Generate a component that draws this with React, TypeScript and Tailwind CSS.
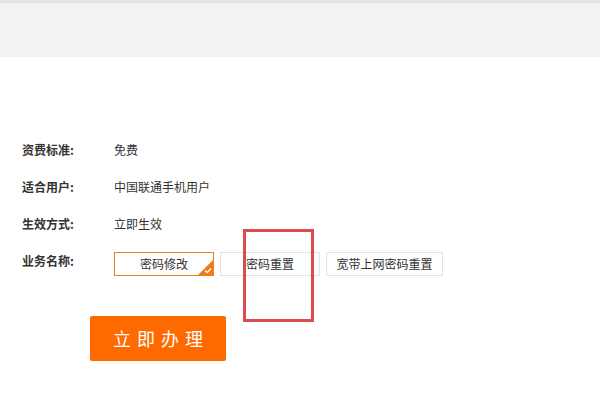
import React from "react";

const font = { fontFamily: '"Microsoft YaHei", "Noto Sans CJK SC", "Noto Sans", sans-serif' };

function Row({ label, children }: { label: string; children: React.ReactNode }) {
  return (
    <div className="flex items-start">
      <span className="w-[92px] shrink-0 text-[12px] leading-[18px] font-bold text-[#333]">{label}</span>
      <div className="text-[12px] leading-[18px] text-[#333]">{children}</div>
    </div>
  );
}

function Option({ text, width, active }: { text: string; width: string; active?: boolean }) {
  return (
    <div
      className={`relative h-[24px] ${width} flex items-center justify-center text-[12px] text-[#333] bg-white border ${
        active ? "border-[#e8821e]" : "border-[#e3e3e3]"
      }`}
    >
      {text}
      {active && (
        <svg className="absolute right-0 bottom-0" width="15" height="15" viewBox="0 0 15 15">
          <polygon points="15,0 15,15 0,15" fill="#f27a1a" />
          <path d="M7 10.5 L9.2 12.5 L13 8.5" stroke="#fff" strokeWidth="1.4" fill="none" />
        </svg>
      )}
    </div>
  );
}

export default function App() {
  return (
    <div className="relative w-[600px] h-[401px] bg-white overflow-hidden" style={font}>
      <div className="h-[57px] bg-[#f2f2f2] border-t-[3px] border-[#e2e2e2]" />

      <div className="pl-[22px] pt-[84px] flex flex-col gap-[19px]">
        <Row label="资费标准:">免费</Row>
        <Row label="适合用户:">中国联通手机用户</Row>
        <Row label="生效方式:">立即生效</Row>
        <Row label="业务名称:">
          <div className="flex gap-[6px]">
            <Option text="密码修改" width="w-[100px]" active />
            <Option text="密码重置" width="w-[100px]" />
            <Option text="宽带上网密码重置" width="w-[117px]" />
          </div>
        </Row>
      </div>

      <div className="pl-[90px] mt-[40px]">
        <button className="w-[136px] h-[45px] rounded-[2px] bg-[#ff6a00] text-white text-[18px] tracking-[6px] pl-[6px]">
          立即办理
        </button>
      </div>

      <div className="absolute left-[243px] top-[229px] w-[71px] h-[93px] border-[3px] border-[#dc4a4e]" />
    </div>
  );
}
